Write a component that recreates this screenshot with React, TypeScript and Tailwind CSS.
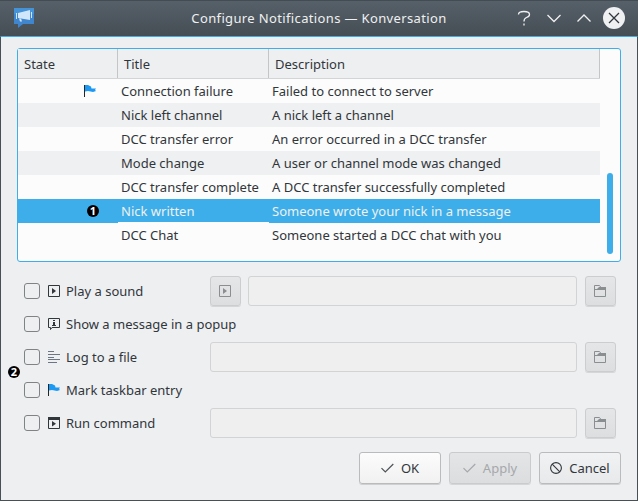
import React from "react";

const rows = [
  { title: "Connection failure", desc: "Failed to connect to server", state: "flag" },
  { title: "Nick left channel", desc: "A nick left a channel" },
  { title: "DCC transfer error", desc: "An error occurred in a DCC transfer" },
  { title: "Mode change", desc: "A user or channel mode was changed" },
  { title: "DCC transfer complete", desc: "A DCC transfer successfully completed" },
  { title: "Nick written", desc: "Someone wrote your nick in a message", state: "badge", selected: true },
  { title: "DCC Chat", desc: "Someone started a DCC chat with you" },
];

function Flag() {
  return (
    <svg width="12" height="12" viewBox="0 0 12 12">
      <path d="M0 0h1v12H0z" fill="#232629" />
      <path d="M1 0H4L7 1.500 7.500 3.500H12L11 5 12 6 9 7 6.500 6.500 4 6 1 6.500z" fill="#1d99f3" />
    </svg>
  );
}

function Play({ color = "#31363b" }: { color?: string }) {
  return (
    <svg width="12" height="12" viewBox="0 0 12 12">
      <path d="M.5.5h11v11H.5z" fill="none" stroke={color} />
      <path d="M4 3v6l4-3z" fill={color} />
    </svg>
  );
}

function Popup() {
  return (
    <svg className="overflow-visible" width="12" height="12" viewBox="0 0 12 12">
      <path d="M.5.5h11v9H4L2.500 11.500V9.500h-2z" fill="none" stroke="#31363b" />
      <path d="M5 2h2v1H5zM5 4h2v3h1v1H4V7h1V5H5z" fill="#31363b" />
    </svg>
  );
}

function Lines() {
  return (
    <svg width="12" height="12" viewBox="0 0 12 12">
      <path d="M0 .5h6M0 3.500h12M0 6.500h6M0 8.500h12M0 11.500h9" stroke="#6b7584" />
    </svg>
  );
}

function Run() {
  return (
    <svg width="12" height="12" viewBox="0 0 12 12">
      <path d="M.5.5h11v11H.5z" fill="none" stroke="#31363b" />
      <path d="M0 0h12v3H0zM4 4v5.500l4-2.750z" fill="#31363b" />
    </svg>
  );
}

function Folder() {
  return (
    <svg width="12" height="12" viewBox="0 0 12 12">
      <path d="M.5 11.500V.5h5l1.500 2h4.500v9z" fill="none" stroke="#8b8e90" />
      <path d="M0 4h3l2-2h7v3H0z" fill="#8b8e90" />
    </svg>
  );
}

function Check({ color }: { color: string }) {
  return (
    <svg width="13" height="10" viewBox="0 0 13 10">
      <path d="M.5 5.200 4.300 9 12.300 1" fill="none" stroke={color} strokeWidth="1.2" />
    </svg>
  );
}

function Badge({ n }: { n: number }) {
  return (
    <span className="flex h-3 w-3 items-center justify-center rounded-full bg-black font-['Noto_Sans',sans-serif] text-[11px] leading-3 font-bold text-white">
      {n}
    </span>
  );
}

function ToolButton({ children, className = "" }: { children: React.ReactNode; className?: string }) {
  return (
    <button className={`flex h-[30px] w-[31px] shrink-0 items-center rounded-[3px] border border-[#cccdcf] bg-linear-to-b from-[#e5e6e8] to-[#dddee0] pl-2 shadow-[0_1px_0_#d5d6d7] ${className}`}>
      {children}
    </button>
  );
}

function Field() {
  return <div className="h-[30px] flex-1 rounded-[3px] border border-[#d2d3d4] bg-[#efefef]" />;
}

const options = [
  { label: "Play a sound", icon: <Play />, field: true, play: true },
  { label: "Show a message in a popup", icon: <Popup /> },
  { label: "Log to a file", icon: <Lines />, field: true },
  { label: "Mark taskbar entry", icon: <Flag /> },
  { label: "Run command", icon: <Run />, field: true },
];

export default function App() {
  return (
    <div className="relative flex h-[501px] w-[638px] flex-col overflow-hidden bg-[#eeeff1] font-['Noto_Sans',sans-serif] text-[13px] text-[#31363b]">
      <header className="flex h-9 shrink-0 items-center border-t border-[#434c53] bg-linear-to-b from-[#566069] to-[#454e54] pr-[13px] pl-[13px]">
        <svg className="-mt-1 shrink-0" width="22" height="22" viewBox="0 0 22 22">
          <path d="M1 2h20v16H10l-5 4v-4H1z" fill="#3f86cf" />
          <path d="M1 2h20v6H1z" fill="#4592d6" />
          <path d="M3 7h1v6H3zM5 7l12-3v10L5 12zM18 6h1v6h-1z" fill="#cfe6fb" />
          <path d="M6 12.500h2l1 3H7z" fill="#cfe6fb" />
        </svg>
        <h1 className="flex-1 text-center text-[13px] tracking-[0.36px] text-[#eff0f1]"><span className="ml-[88px]">Configure Notifications — Konversation</span></h1>
        <svg className="-mt-px shrink-0" width="110" height="24" viewBox="0 0 110 24" fill="none" stroke="#eff0f1" strokeWidth="1.3">
          <path d="M3.500 8.500Q3.500 5.500 9 5.500 14.500 5.500 14.500 8.500 14.500 10.500 11.500 11.500 9 12.500 9 15.500M9 17.500v2" />
          <path d="m32.500 9 6.500 6.500L45.500 9M62.500 15.500 69 9l6.500 6.500" />
          <circle cx="99" cy="12" r="11" fill="#eff0f1" stroke="none" />
          <path d="m94 7 10 10M104 7 94 17" stroke="#31363b" />
        </svg>
      </header>
      <main className="flex flex-1 flex-col border border-[#475057] border-t-[#3daee9] pr-4 pl-4">
        <section className="mt-[11px] flex h-[214px] w-[604px] shrink-0 rounded-[3px] border border-[#3daee9] bg-[#fcfcfc]">
          <div className="w-[582px]">
            <div className="flex h-[30px] items-center border-b border-[#d3d4d6] bg-[#eeeff1]">
              <div className="flex h-full w-[100px] items-center border-r border-[#c3c5c7] pt-0.5 pl-1.5">State</div>
              <div className="flex h-full w-[151px] items-center border-r border-[#c3c5c7] pt-0.5 pl-1.5">Title</div>
              <div className="flex h-full flex-1 items-center border-r border-[#c3c5c7] pt-0.5 pl-1.5">Description</div>
            </div>
            {rows.map((r, i) => (
              <div key={r.title} className={`flex h-6 items-center ${r.selected ? "bg-[#3daee9] text-[#eff0f1]" : i % 2 ? "bg-[#eff0f1]" : ""}`}>
                <div className="w-[100px]">
                  {r.state === "flag" && <div className="pl-[66px]"><Flag /></div>}
                  {r.state === "badge" && <div className="pl-[69px]"><Badge n={1} /></div>}
                </div>
                <div className={`flex h-6 w-[151px] items-center pl-[3px] whitespace-nowrap ${r.selected ? "border-b border-[#fcfcfc] pt-[3px]" : "pt-0.5"}`}>{r.title}</div>
                <div className="pt-0.5 pl-[3px] whitespace-nowrap">{r.desc}</div>
              </div>
            ))}
          </div>
          <div className="mt-[124px] ml-[7px] h-[81px] w-1.5 rounded-full bg-[#3daee9]" />
        </section>
        <section className="mt-3 flex flex-col pl-[7px]">
          {options.map((o) => (
            <div key={o.label} className="flex h-[33px] items-center">
              <span className="h-4 w-4 shrink-0 rounded-[3px] border border-[#7f8386]" />
              <span className="ml-2 flex w-[18px] shrink-0">{o.icon}</span>
              <label className="w-36 shrink-0 pt-[3px] whitespace-nowrap">{o.label}</label>
              {o.field && (
                <div className="flex w-[406px]">
                  {o.play && <ToolButton className="mr-[7px]"><Play color="#8b8e90" /></ToolButton>}
                  <Field />
                  <ToolButton className="ml-2"><Folder /></ToolButton>
                </div>
              )}
            </div>
          ))}
        </section>
        <footer className="mt-[13px] flex justify-end gap-2">
          <button className="flex h-8 w-[82px] items-center justify-center gap-[7px] rounded-[3px] border border-[#b9bbbd] bg-linear-to-b from-[#fcfcfc] to-[#f1f1f2] shadow-[0_1px_0_#cfd0d2]"><Check color="#4d5256" /><span className="pt-px">OK</span></button>
          <button className="flex h-8 w-[82px] items-center justify-center gap-[7px] rounded-[3px] border border-[#c9cbcc] bg-linear-to-b from-[#e4e5e7] to-[#dcdddf] text-[#a5a8ab] shadow-[0_1px_0_#d5d6d7]"><Check color="#a5a8ab" /><span className="pt-px">Apply</span></button>
          <button className="flex h-8 w-[82px] items-center justify-center gap-[7px] rounded-[3px] border border-[#b9bbbd] bg-linear-to-b from-[#f1f2f3] to-[#e8e9eb] shadow-[0_1px_0_#cfd0d2]">
            <svg width="12" height="12" viewBox="0 0 12 12" fill="none" stroke="#31363b" strokeWidth="1.1"><circle cx="6" cy="6" r="5.400" /><path d="m2.200 2.200 7.600 7.600" /></svg>
            <span className="pt-px">Cancel</span>
          </button>
        </footer>
      </main>
      <div className="absolute top-[366px] left-2"><Badge n={2} /></div>
    </div>
  );
}
